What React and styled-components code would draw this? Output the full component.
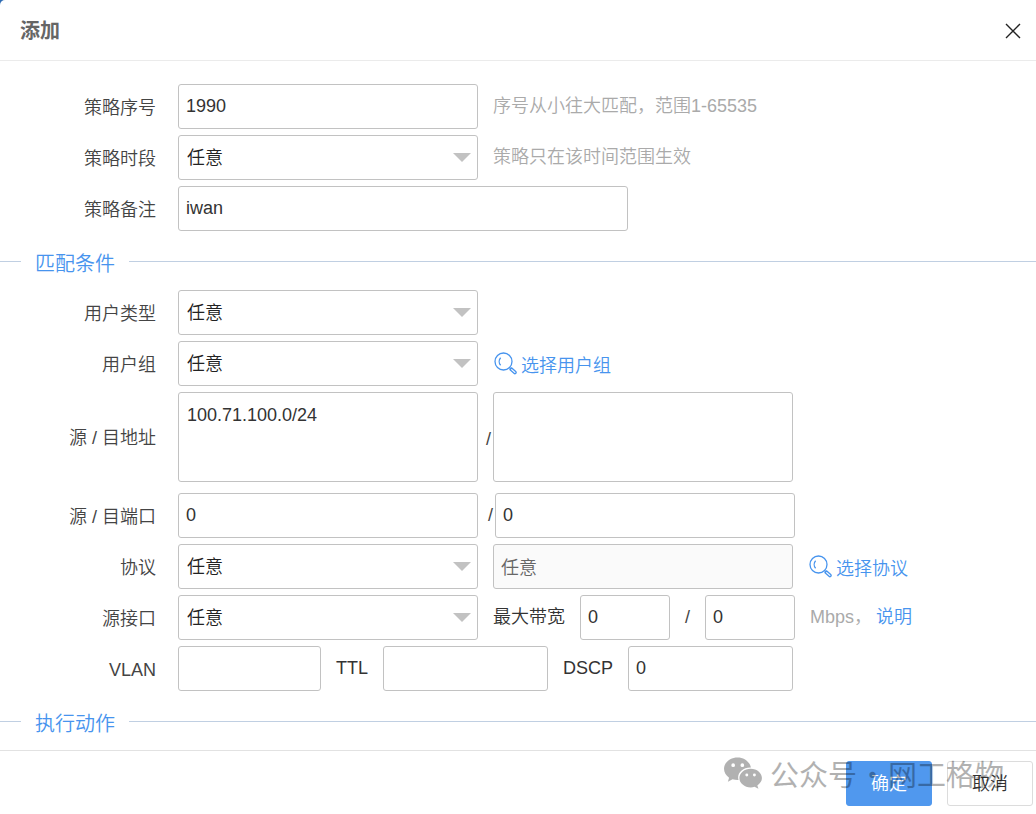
import React from "react";
import styled, { createGlobalStyle } from "styled-components";

const SearchIcon = () => (
  <IconSvg viewBox="0 0 24 24" aria-hidden="true">
    <circle cx="10.500" cy="9.500" r="8.500" />
    <path d="M7.600 5.800a5.600 5.600 0 0 0 0 7.400" />
    <path d="M16.500 15.500l1.300 1.200" />
    <path d="M17 17.700l1.700-1.800 4 3.600a1.200 1.200 0 0 1-1.700 1.800z" />
  </IconSvg>
);

const WechatIcon = () => (
  <WechatSvg viewBox="0 0 40 32" aria-hidden="true">
    <path
      fillRule="evenodd"
      d="M14 0C6.300 0 0 5.200 0 11.700c0 3.700 2 6.900 5.200 9.100L4 25l4.800-2.500c1.700.5 3.400.8 5.200.8h.9a10 10 0 0 1-.4-2.700c0-5.600 5.500-10.200 12.200-10.200h.9C26.400 4.400 20.700 0 14 0zM9.400 6.100a1.900 1.900 0 1 1 0 3.800 1.900 1.900 0 0 1 0-3.800zm9.400 0a1.900 1.900 0 1 1 0 3.800 1.900 1.900 0 0 1 0-3.800z"
    />
    <path
      fillRule="evenodd"
      d="M27.400 11.600c-6.400 0-11.600 4.300-11.600 9.600s5.200 9.600 11.600 9.600c1.400 0 2.700-.2 3.900-.6l4 2-1.100-3.500c2.900-1.800 4.700-4.500 4.700-7.500 0-5.300-5.100-9.600-11.500-9.600zm-4 5a1.500 1.500 0 1 1 0 3 1.500 1.500 0 0 1 0-3zm7.800 0a1.500 1.500 0 1 1 0 3 1.500 1.500 0 0 1 0-3z"
    />
  </WechatSvg>
);

const SelectBox = ({ id }) => (
  <SelectWrap>
    <Select id={id} defaultValue="any">
      <option value="any">任意</option>
    </Select>
    <Arrow viewBox="0 0 18 9" aria-hidden="true">
      <path d="M0 0h18l-9 9z" />
    </Arrow>
  </SelectWrap>
);

const App = () => {
  return (
    <>
      <GlobalStyle />
      <Dialog>
        <Header>
          <Title>添加</Title>
          <Close type="button" aria-label="关闭">
            <svg viewBox="0 0 16 16" aria-hidden="true">
              <path d="M1 1l14 14M15 1L1 15" />
            </svg>
          </Close>
        </Header>

        <Form>
          <Row>
            <Label htmlFor="order">策略序号</Label>
            <Input id="order" defaultValue="1990" />
            <Hint>序号从小往大匹配，范围1-65535</Hint>
          </Row>
          <Row>
            <Label htmlFor="period">策略时段</Label>
            <SelectBox id="period" />
            <Hint>策略只在该时间范围生效</Hint>
          </Row>
          <Row>
            <Label htmlFor="remark">策略备注</Label>
            <Input id="remark" $width={450} defaultValue="iwan" />
          </Row>

          <Section>匹配条件</Section>

          <Row>
            <Label htmlFor="userType">用户类型</Label>
            <SelectBox id="userType" />
          </Row>
          <Row>
            <Label htmlFor="userGroup">用户组</Label>
            <SelectBox id="userGroup" />
            <IconLink href="#group">
              <SearchIcon />
              <span>选择用户组</span>
            </IconLink>
          </Row>
          <Row $tall>
            <Label htmlFor="srcAddr">源 / 目地址</Label>
            <Textarea id="srcAddr" defaultValue="100.71.100.0/24" />
            <Slash $width={15} $low>
              /
            </Slash>
            <Textarea aria-label="目地址" />
          </Row>
          <Row>
            <Label htmlFor="srcPort">源 / 目端口</Label>
            <Input id="srcPort" defaultValue="0" />
            <Slash $width={17}>/</Slash>
            <Input aria-label="目端口" defaultValue="0" />
          </Row>
          <Row>
            <Label htmlFor="protocol">协议</Label>
            <SelectBox id="protocol" />
            <Spacer />
            <Input aria-label="协议名称" defaultValue="任意" disabled />
            <IconLink href="#protocol">
              <SearchIcon />
              <span>选择协议</span>
            </IconLink>
          </Row>
          <Row>
            <Label htmlFor="iface">源接口</Label>
            <SelectBox id="iface" />
            <InlineLabel htmlFor="bandwidth">最大带宽</InlineLabel>
            <Input id="bandwidth" $width={90} defaultValue="0" />
            <Slash $width={35} $center>
              /
            </Slash>
            <Input aria-label="最大下行带宽" $width={90} defaultValue="0" />
            <Hint>Mbps，</Hint>
            <TextLink href="#help">说明</TextLink>
          </Row>
          <Row>
            <Label htmlFor="vlan">VLAN</Label>
            <Input id="vlan" $width={143} />
            <InlineLabel htmlFor="ttl">TTL</InlineLabel>
            <Input id="ttl" $width={165} />
            <InlineLabel htmlFor="dscp">DSCP</InlineLabel>
            <Input id="dscp" $width={165} defaultValue="0" />
          </Row>

          <Section>执行动作</Section>
        </Form>

        <Footer>
          <Button type="button" $primary>
            确定
          </Button>
          <Button type="button">取消</Button>
          <Watermark>
            <WechatIcon />
            <span>公众号</span>
            <Dot>·</Dot>
            <span>网工格物</span>
          </Watermark>
        </Footer>
      </Dialog>
    </>
  );
};

const GlobalStyle = createGlobalStyle`
  * {
    box-sizing: border-box;
  }
  body {
    margin: 0;
    background: #2f6cb3;
    color: #444;
    font-family: "Liberation Sans", "Noto Sans CJK SC", sans-serif;
    font-size: 18px;
    font-weight: 350;
    line-height: 24px;
  }
  input,
  select,
  textarea,
  button {
    font: inherit;
  }
  a {
    color: #4794ee;
    text-decoration: none;
  }
`;
const Dialog = styled.div`
  display: flex;
  flex-direction: column;
  min-height: 100vh;
  background: #fff;
  border-top-left-radius: 5px;
`;
const Header = styled.header`
  display: flex;
  align-items: center;
  justify-content: space-between;
  height: 61px;
  padding: 1px 15px 0 20px;
  border-bottom: 1px solid #ebebeb;
`;
const Title = styled.h1`
  margin: 0;
  color: #666;
  font-size: 20px;
  font-weight: 700;
`;
const Close = styled.button`
  display: flex;
  padding: 0;
  border: 0;
  background: none;
  cursor: pointer;
  svg {
    width: 16px;
    height: 16px;
    fill: none;
    stroke: #222;
    stroke-width: 1.4;
  }
`;
const Form = styled.form`
  display: flex;
  flex-direction: column;
  padding-top: 23px;
`;
const Row = styled.div`
  display: flex;
  align-items: center;
  margin-bottom: ${({ $tall }) => ($tall ? 11 : 6)}px;
`;
const Label = styled.label`
  width: 178px;
  padding: 2px 22px 0 0;
  flex-shrink: 0;
  text-align: right;
`;
const InlineLabel = styled.label`
  padding: 0 15px 2px;
  color: #333;
`;
const Input = styled.input`
  width: ${({ $width }) => $width || 300}px;
  height: 45px;
  padding: 0 7px;
  border: 1px solid #c2c2c2;
  border-radius: 3px;
  background: #fff;
  color: #333;
  &:disabled {
    padding-bottom: 2px;
    background: #fafafa;
    color: #666;
  }
`;
const Textarea = styled.textarea`
  width: 300px;
  height: 90px;
  padding: 10px 8px;
  border: 1px solid #c2c2c2;
  border-radius: 3px;
  color: #333;
  resize: none;
`;
const SelectWrap = styled.div`
  position: relative;
  width: 300px;
`;
const Select = styled.select`
  display: block;
  width: 100%;
  height: 45px;
  padding: 0 30px 0 8px;
  border: 1px solid #c2c2c2;
  border-radius: 3px;
  background: #fff;
  color: #222;
  appearance: none;
`;
const Arrow = styled.svg`
  position: absolute;
  top: 18px;
  right: 7px;
  width: 18px;
  height: 9px;
  fill: #c2c2c2;
  pointer-events: none;
`;
const Hint = styled.span`
  padding: 0 4px 2px 15px;
  color: #aaa;
`;
const Slash = styled.span`
  width: ${({ $width }) => $width}px;
  padding: ${({ $low }) => ($low ? "4px" : "0")}
    ${({ $center }) => ($center ? "0" : "2px")}
    ${({ $low }) => ($low ? "0" : "2px")} 0;
  text-align: ${({ $center }) => ($center ? "center" : "right")};
`;
const Spacer = styled.div`
  width: 15px;
`;
const IconLink = styled.a`
  display: flex;
  align-items: center;
  gap: 4px;
  margin-left: 15px;
  span {
    padding-top: 4px;
  }
`;
const IconSvg = styled.svg`
  width: 24px;
  height: 24px;
  fill: none;
  stroke: #4794ee;
  stroke-width: 1.3;
`;
const TextLink = styled.a`
  padding-bottom: 2px;
`;
const Section = styled.h2`
  display: flex;
  align-items: center;
  gap: 14px;
  height: 59px;
  margin: -6px 0 0;
  padding-top: 6px;
  color: #4794ee;
  font-size: 20px;
  font-weight: 350;
  &::before,
  &::after {
    content: "";
    width: 21px;
    height: 1px;
    margin-bottom: 5px;
    background: #c0cfe2;
  }
  &::after {
    flex: 1;
  }
`;
const Footer = styled.footer`
  position: relative;
  display: flex;
  justify-content: flex-end;
  gap: 15px;
  padding: 10px 3px 8px;
  border-top: 1px solid #e2e2e2;
`;
const Button = styled.button`
  width: 86px;
  height: 45px;
  border: 1px solid ${({ $primary }) => ($primary ? "#5098ee" : "#dcdcdc")};
  border-radius: 3px;
  background: ${({ $primary }) => ($primary ? "#5098ee" : "#fff")};
  color: ${({ $primary }) => ($primary ? "#fff" : "#333")};
  cursor: pointer;
`;
const Watermark = styled.div`
  position: absolute;
  top: 4px;
  right: 32px;
  display: flex;
  align-items: center;
  color: #000;
  font-family: "Noto Sans CJK SC", sans-serif;
  font-size: 29px;
  font-weight: 400;
  line-height: 36px;
  opacity: 0.3;
  pointer-events: none;
`;
const WechatSvg = styled.svg`
  width: 39px;
  height: 32px;
  margin-right: 7px;
`;
const Dot = styled.span`
  width: 31px;
  text-align: center;
`;

export default App;
